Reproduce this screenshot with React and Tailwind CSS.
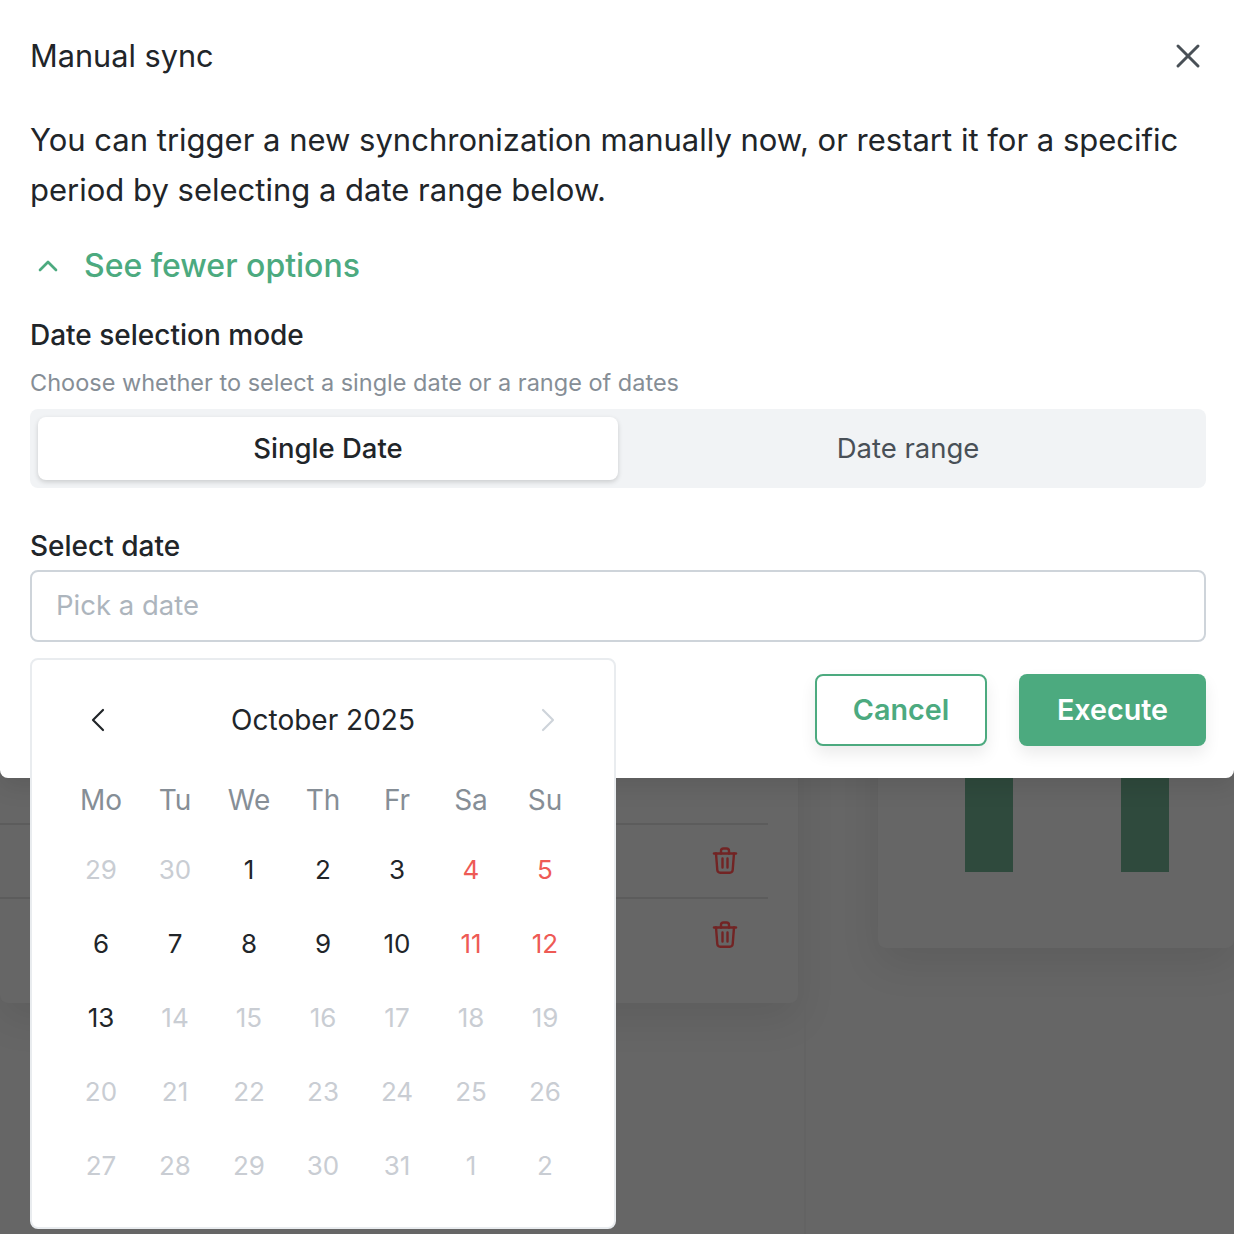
import React from 'react';
import { X, ChevronUp, ChevronLeft, ChevronRight } from 'lucide-react';

const WEEKDAYS = ['Mo', 'Tu', 'We', 'Th', 'Fr', 'Sa', 'Su'];

// tone: m = otro mes / deshabilitado, d = normal, w = fin de semana
const WEEKS = [
  [['29', 'm'], ['30', 'm'], ['1', 'd'], ['2', 'd'], ['3', 'd'], ['4', 'w'], ['5', 'w']],
  [['6', 'd'], ['7', 'd'], ['8', 'd'], ['9', 'd'], ['10', 'd'], ['11', 'w'], ['12', 'w']],
  [['13', 'd'], ['14', 'm'], ['15', 'm'], ['16', 'm'], ['17', 'm'], ['18', 'm'], ['19', 'm']],
  [['20', 'm'], ['21', 'm'], ['22', 'm'], ['23', 'm'], ['24', 'm'], ['25', 'm'], ['26', 'm']],
  [['27', 'm'], ['28', 'm'], ['29', 'm'], ['30', 'm'], ['31', 'm'], ['1', 'm'], ['2', 'm']],
];

const TONES = {
  m: 'text-[#c9cdd3]',
  d: 'text-[#212529]',
  w: 'text-[#ee5a55]',
};

const TrashIcon = () => (
  <svg width="26" height="28" viewBox="0 0 26 28" fill="none" stroke="#722424" strokeWidth="2.4" strokeLinecap="round" strokeLinejoin="round">
    <path d="M2 6.5h22" />
    <path d="M9 6.5V4a2.5 2.5 0 0 1 2.5-2.5h3A2.5 2.5 0 0 1 17 4v2.5" />
    <path d="M4 6.5l1.3 16.5a3 3 0 0 0 3 2.7h9.400a3 3 0 0 0 3-2.700L22 6.500" />
    <path d="M10.500 11.500v9M15.500 11.500v9" />
  </svg>
);

const Calendar = () => (
  <div className="absolute left-0 top-[88px] z-10 w-[586px] h-[571px] bg-white rounded-lg border-2 border-[#e9ecef] px-[32px]">
    <div className="flex items-center justify-between h-[119px] pt-[1px] pl-[14px] pr-[14px]">
      <ChevronLeft size={40} strokeWidth={1.3} className="text-[#212529]" />
      <span className="text-[28px] text-[#212529]">October 2025</span>
      <ChevronRight size={40} strokeWidth={1.3} className="text-[#ced4da]" />
    </div>
    <div className="grid grid-cols-7 h-[40px] items-center">
      {WEEKDAYS.map((d) => (
        <span key={d} className="text-center text-[28px] text-[#868e96]">{d}</span>
      ))}
    </div>
    <div className="mt-[13px]">
      {WEEKS.map((week, i) => (
        <div key={i} className="grid grid-cols-7 h-[74px] items-center">
          {week.map(([day, tone], j) => (
            <span key={j} className={`text-center text-[26px] ${TONES[tone]}`}>{day}</span>
          ))}
        </div>
      ))}
    </div>
  </div>
);

const Backdrop = () => (
  <div className="h-[1234px] flex bg-[#666666] overflow-hidden">
    <div className="w-[798px] h-[1003px] shrink-0 bg-[#666666] rounded-lg shadow-[0_16px_40px_rgba(0,0,0,0.09)] pt-[823px]">
      {[0, 1].map((row) => (
        <div key={row} className="w-[768px] h-[74px] border-t-2 border-[#5c5c5c] flex items-center justify-end pr-[30px]">
          <TrashIcon />
        </div>
      ))}
    </div>
    <div className="ml-[6px] w-[2px] h-full shrink-0 bg-[#636363]" />
    <div className="ml-[72px] flex-1 h-[948px] bg-[#666666] rounded-lg shadow-[0_16px_40px_rgba(0,0,0,0.09)] flex gap-[108px] pl-[87px]">
      <div className="w-[48px] h-[872px] bg-[#2f4a3d]" />
      <div className="w-[48px] h-[872px] bg-[#2f4a3d]" />
    </div>
  </div>
);

export default function App() {
  return (
    <div className="relative h-[1234px] overflow-hidden font-['Inter',sans-serif]">
      <Backdrop />
      {/* Modal */}
      <div className="absolute inset-x-0 top-0 h-[778px] bg-white rounded-b-lg pl-[30px] pr-[28px] shadow-[0_8px_24px_rgba(0,0,0,0.1)]">
        <div className="flex items-center justify-between h-[112px]">
          <h2 className="text-[30.700px] text-[#212529]">Manual sync</h2>
          <X size={40} strokeWidth={1.8} className="text-[#495057] mr-[-1.500px]" />
        </div>
        <p className="text-[31px] leading-[50px] text-[#212529] mt-[3px]">
          You can trigger a new synchronization manually now, or restart it for a specific period by selecting a date range below.
        </p>
        <div className="flex items-center gap-[20px] mt-[26px] h-[50px]">
          <ChevronUp size={32} strokeWidth={2} className="text-[#4caa7f] ml-[2px]" />
          <span className="text-[32px] font-medium text-[#4caa7f]">See fewer options</span>
        </div>
        <div className="mt-[24px] text-[28px] font-[450] leading-[40px] text-[#212529]">Date selection mode</div>
        <div className="mt-[11px] text-[23.500px] leading-[34px] text-[#868e96]">Choose whether to select a single date or a range of dates</div>
        <div className="mt-[9px] h-[79px] bg-[#f1f3f5] rounded-lg p-[8px] grid grid-cols-2">
          <div className="flex items-center justify-center bg-white rounded-lg shadow-[0_2px_5px_rgba(0,0,0,0.16)] text-[27.500px] font-[450] text-[#212529]">Single Date</div>
          <div className="flex items-center justify-center text-[27.500px] text-[#495057]">Date range</div>
        </div>
        <div className="mt-[38px] text-[28px] font-[450] leading-[40px] text-[#212529]">Select date</div>
        <div className="relative mt-[4px]">
          <div className="h-[72px] border-2 border-[#ced4da] rounded-lg flex items-center px-[24px] text-[27.500px] text-[#adb5bd]">Pick a date</div>
          <Calendar />
        </div>
        <div className="flex justify-end gap-[32px] mt-[32px]">
          <button className="w-[172px] h-[72px] border-2 border-[#4caa7f] rounded-lg text-[28.700px] font-semibold text-[#4caa7f] bg-white shadow-[0_8px_16px_rgba(0,0,0,0.08)]">Cancel</button>
          <button className="w-[187px] h-[72px] rounded-lg text-[28.700px] font-semibold text-white bg-[#4caa7f] shadow-[0_8px_16px_rgba(0,0,0,0.08)]">Execute</button>
        </div>
      </div>
    </div>
  );
}
